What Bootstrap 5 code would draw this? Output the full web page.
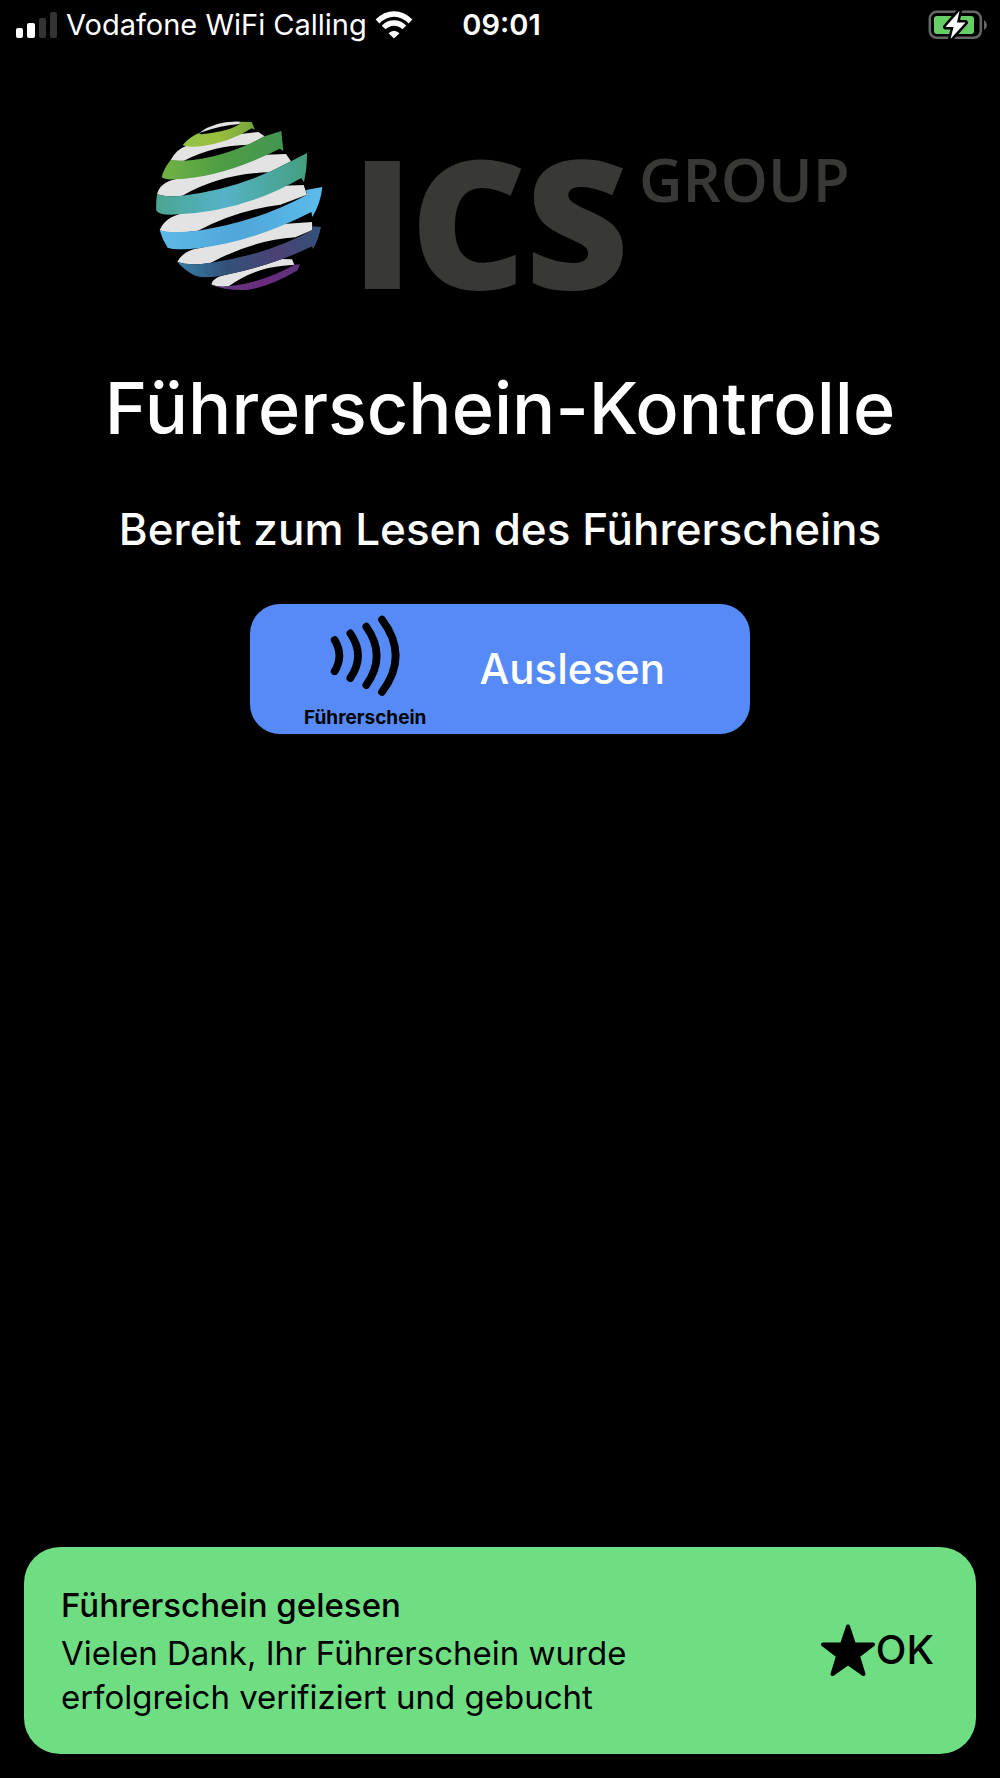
<!DOCTYPE html>
<html lang="de">
<head>
<meta charset="utf-8">
<meta name="viewport" content="width=device-width, initial-scale=1">
<title>Führerschein-Kontrolle</title>
<link href="https://cdn.jsdelivr.net/npm/bootstrap@5.3.0/dist/css/bootstrap.min.css" rel="stylesheet">
<style>
  body { background: #000; color: #fff; font-family: Inter, "Liberation Sans", sans-serif; }
  .status-bar { height: 50px; padding: 0 13px 0 16px; font-size: 29px; line-height: 32px; }
  .status-side { flex: 1 1 0; white-space: nowrap; }
  .status-time { font-weight: 600; }
  .brand-logo { width: 72%; margin-top: 40px; }
  .brand-text { fill: #383836; font-family: "Open Sans", "Noto Sans", sans-serif; }
  .app-title { font-size: 72px; line-height: 92px; font-weight: 500; margin: 12px 0 0; }
  .app-state { font-size: 44px; line-height: 56px; font-weight: 500; margin: 47px 0 0; }
  .read-btn, .read-btn:hover { width: 500px; max-width: 100%; height: 130px; margin-top: 47px; padding: 6px 54px 0 54px; border: 0; border-radius: 30px; background: #568bf7; color: #fff; }
  .read-icon { width: 74px; height: 84px; }
  .read-caption { font-size: 19px; line-height: 24px; font-weight: 700; color: #000; margin-top: 8px; }
  .read-label { font-size: 42px; line-height: 56px; font-weight: 500; padding: 0 0 6px 22px; }
  .toast-box { margin: 0 24px 24px; padding: 36px 42px 35px 37px; border-radius: 36px; background: #6fde83; color: #000; }
  .toast-head { font-size: 33px; line-height: 44px; font-weight: 500; margin: 0 0 4px; }
  .toast-msg { font-size: 33px; line-height: 44px; margin: 0; max-width: 600px; }
  .ok-btn, .ok-btn:hover { font-size: 40px; line-height: 48px; font-weight: 500; color: #000; padding: 0 0 2px; border: 0; }
</style>
</head>
<body>
<div class="d-flex flex-column min-vh-100">
  <header class="status-bar d-flex align-items-center">
    <div class="status-side d-flex align-items-center">
      <svg class="me-2" width="42" height="28" viewBox="0 0 42 28" aria-hidden="true">
        <rect x="0" y="17" width="7" height="10" rx="2" fill="#fff"/>
        <rect x="11" y="12" width="8" height="15" rx="2" fill="#fff"/>
        <rect x="23" y="7" width="7" height="20" rx="2" fill="#333"/>
        <rect x="34" y="1" width="7" height="26" rx="2" fill="#333"/>
      </svg>
      <span>Vodafone WiFi Calling</span>
      <svg class="ms-2" width="38" height="28" viewBox="0 0 38 28" aria-hidden="true" fill="none" stroke="#fff" stroke-width="5.4">
        <path d="M2.5 10.5Q10 3 19 3T35.500 10.500"/>
        <path d="M8.700 16.500Q13 12 19 12T29.300 16.500"/>
        <path d="M19 27.500L13.500 22.300Q19 17.300 24.500 22.300Z" fill="#fff" stroke="none"/>
      </svg>
    </div>
    <span class="status-time">09:01</span>
    <div class="status-side d-flex justify-content-end">
      <svg width="60" height="30" viewBox="0 0 60 30" aria-label="Akku lädt">
        <rect x="2.800" y="1.800" width="51" height="26" rx="7" fill="none" stroke="#666" stroke-width="2.500"/>
        <rect x="7" y="6" width="40" height="18" rx="3" fill="#67ce67"/>
        <path d="M57 10Q60 12 60 15T57 20Z" fill="#666"/>
        <path d="M32.500 1L18.500 17H26.500L23.500 29L38.500 12.500H30Z" fill="#fff" stroke="#000" stroke-width="5" stroke-linejoin="round" paint-order="stroke"/>
      </svg>
    </div>
  </header>

  <main class="d-flex flex-column align-items-center text-center flex-grow-1">
    <svg class="brand-logo" viewBox="0 -20 720 260" role="img" aria-label="ICS Group">
      <defs>
        <linearGradient id="g1" x1="0" x2="1"><stop offset="0" stop-color="#93c447"/><stop offset=".5" stop-color="#99bd3f"/><stop offset="1" stop-color="#73a63b"/></linearGradient>
        <linearGradient id="g2" x1="0" x2="1"><stop offset="0" stop-color="#72b244"/><stop offset=".5" stop-color="#4e9d43"/><stop offset="1" stop-color="#439652"/></linearGradient>
        <linearGradient id="g3" x1="0" y1="0" x2="1" y2="0"><stop offset="0" stop-color="#4aa590"/><stop offset=".45" stop-color="#55b3c8"/><stop offset="1" stop-color="#449f7e"/></linearGradient>
        <linearGradient id="g4" x1="0" x2="1"><stop offset="0" stop-color="#5cb9e7"/><stop offset=".5" stop-color="#4fa6d8"/><stop offset="1" stop-color="#5bbcec"/></linearGradient>
        <linearGradient id="g5" x1="0" x2="1"><stop offset="0" stop-color="#397fa8"/><stop offset=".35" stop-color="#325078"/><stop offset=".7" stop-color="#4c4175"/><stop offset="1" stop-color="#315278"/></linearGradient>
        <linearGradient id="g6" x1="0" x2="1"><stop offset="0" stop-color="#5e3c80"/><stop offset=".6" stop-color="#6b2b7e"/><stop offset="1" stop-color="#5b347a"/></linearGradient>
      </defs>
      <svg x="0" y="0" width="200" height="190" viewBox="0 0 600 570">
        <g fill="#e3e3e3">
          <path d="M177 69Q225 32 300 35L299 42Q245 45 177 69Z"/>
          <path d="M92 150Q108 118 140 107Q260 72 355 66L374 79L326 104Q220 106 132 152Q105 155 92 150Z"/>
          <path d="M51 253Q60 218 105 208Q190 195 378 134L438 132L453 154L388 187Q245 190 127 257Q80 263 51 253Z"/>
          <path d="M59 361Q75 321 130 310Q270 280 432 227L491 225L501 254L421 284Q290 300 174 362Q90 374 59 361Z"/>
          <path d="M112 456Q130 420 180 414Q300 390 431 342L516 336L517 360L466 382Q340 390 213 458Q150 468 112 456Z"/>
          <path d="M214 523Q218 502 255 495Q350 475 426 447L456 448L463 464L430 467Q340 475 266 529Q230 533 214 523Z"/>
        </g>
        <path fill="url(#g1)" d="M128 105Q150 80 177 69Q180 74 190 72Q270 63 299 42L300 35L335 36L345 59L335 55Q270 97 183 109Q145 113 128 105Z"/>
        <path fill="url(#g2)" d="M65 201Q72 174 92 150L132 152Q250 145 374 79L424 63L430 123L419 116Q250 202 105 208Q72 210 65 201Z"/>
        <path fill="url(#g3)" d="M49 302Q47 280 51 253Q80 263 127 257Q300 237 453 154L501 129Q502 175 492 217L484 204Q310 304 115 313Q60 318 49 302Z"/>
        <path fill="url(#g4)" d="M59 361Q90 371 174 362Q350 336 501 254L498 240L547 231Q542 280 517 321L514 306Q340 395 180 414Q110 422 83 413Q68 391 59 361Z"/>
        <path fill="url(#g5)" d="M112 456Q150 468 213 458Q385 433 517 360L517 349L543 351Q535 390 519 417L516 409Q410 462 255 495Q190 508 162 496Q132 479 112 456Z"/>
        <path fill="url(#g6)" d="M214 525Q245 533 266 529Q370 517 463 464L480 463L473 481Q390 530 326 539Q265 544 214 525Z"/>
      </svg>
      <g class="brand-text" font-size="180" font-weight="800">
        <text x="211" y="179">I</text>
        <text x="270" y="179">C</text>
        <text x="385" y="179">S</text>
      </g>
      <text class="brand-text" x="499" y="92" font-size="60" font-weight="600">GROUP</text>
    </svg>

    <h1 class="app-title">Führerschein-Kontrolle</h1>
    <p class="app-state">Bereit zum Lesen des Führerscheins</p>

    <button type="button" class="btn read-btn d-flex align-items-center">
      <span class="d-flex flex-column align-items-center">
        <svg class="read-icon" viewBox="263 74 222 252" aria-hidden="true" fill="none" stroke="#000" stroke-width="23" stroke-linecap="round">
          <path d="M283 152Q311 199 283 246"/>
          <path d="M330 132Q376 199 330 266"/>
          <path d="M378 112Q440 199 378 287"/>
          <path d="M425 91Q507 199 425 308"/>
        </svg>
        <span class="read-caption">Führerschein</span>
      </span>
      <span class="read-label flex-grow-1">Auslesen</span>
    </button>
  </main>

  <section class="toast-box d-flex align-items-center justify-content-between" role="status">
    <div>
      <h2 class="toast-head">Führerschein gelesen</h2>
      <p class="toast-msg">Vielen Dank, Ihr Führerschein wurde erfolgreich verifiziert und gebucht</p>
    </div>
    <button type="button" class="btn ok-btn d-flex align-items-center">
      <svg width="56" height="52" viewBox="0 0 56 52" aria-hidden="true"><path d="M28 2.500L34 20.500H53L38 32L43.500 50L28 39L12.500 50L18 32L3 20.500H22Z" stroke="#000" stroke-width="4" stroke-linejoin="round"/></svg>
      <span>OK</span>
    </button>
  </section>
</div>
<script src="https://cdn.jsdelivr.net/npm/bootstrap@5.3.0/dist/js/bootstrap.bundle.min.js"></script>
</body>
</html>
